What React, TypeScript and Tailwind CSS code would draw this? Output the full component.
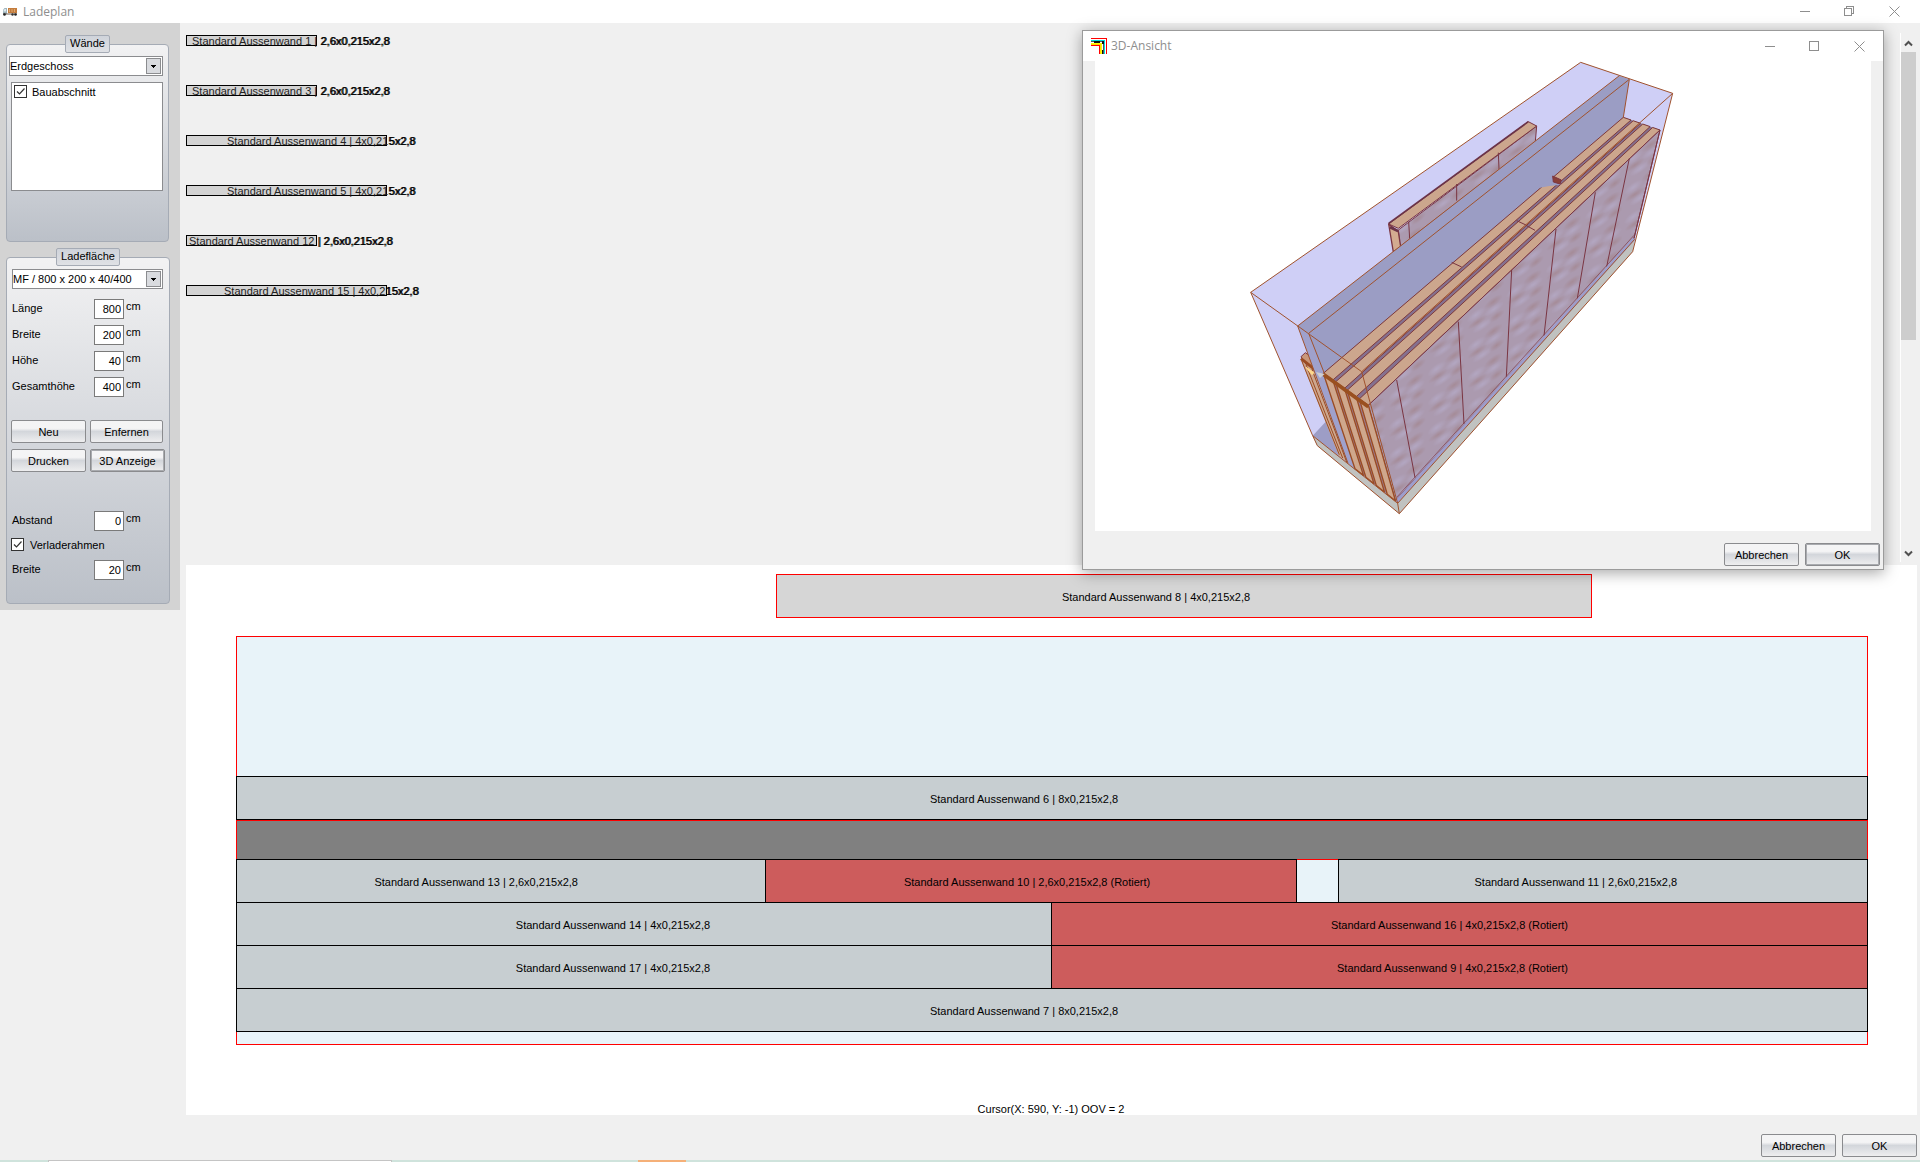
import { ReactNode } from "react";
import clsx from "clsx";

type Point = [number, number];

const storedWalls = [
  { inside: "Standard Aussenwand 1 |", outside: " 2,6x0,215x2,8", bar: "w-[131px] pl-[5px]" },
  { inside: "Standard Aussenwand 3 |", outside: " 2,6x0,215x2,8", bar: "w-[131px] pl-[5px]" },
  { inside: "Standard Aussenwand 4 | 4x0,21", outside: "5x2,8", bar: "w-[201px] pl-[40px]" },
  { inside: "Standard Aussenwand 5 | 4x0,21", outside: "5x2,8", bar: "w-[201px] pl-[40px]" },
  { inside: "Standard Aussenwand 12", outside: " | 2,6x0,215x2,8", bar: "w-[131px] pl-[2px]" },
  { inside: "Standard Aussenwand 15 | 4x0,2", outside: "15x2,8", bar: "w-[201px] pl-[37px]" },
];

const MinimizeIcon = () => (
  <svg className="w-[11px] h-[11px]" viewBox="0 0 11 11" shapeRendering="crispEdges">
    <path d="M0.5 5.5H10.5" stroke="#8e8e8e" />
  </svg>
);

const MaximizeIcon = () => (
  <svg className="w-[11px] h-[11px]" viewBox="0 0 11 11" fill="none" shapeRendering="crispEdges">
    <path d="M0.5 0.5H9.5V9.5H0.5Z" stroke="#8e8e8e" />
  </svg>
);

const RestoreIcon = () => (
  <svg className="w-[11px] h-[11px]" viewBox="0 0 11 11" fill="none" shapeRendering="crispEdges">
    <path d="M0.5 2.5H7.5V9.5H0.5ZM2.5 2.5V0.5H9.5V7.5H7.5" stroke="#8e8e8e" />
  </svg>
);

const CloseIcon = () => (
  <svg className="w-[11px] h-[11px]" viewBox="0 0 11 11">
    <path d="M0.5 0.5L10.5 10.5M10.5 0.5L0.5 10.5" stroke="#8e8e8e" />
  </svg>
);

const TruckIcon = () => (
  <svg className="w-4 h-4" viewBox="0 0 16 16">
    <path d="M1 6L2.500 4H5V10H1Z" fill="#9fb4bd" />
    <path d="M1.500 6.500L2.700 5H4V7.500H1.500Z" fill="#dfe9ee" />
    <rect x="6" y="4" width="9" height="5" fill="#c47c3c" />
    <path d="M7.500 5V8M10 5V8M12.500 5V8" stroke="#dba873" />
    <path d="M1 10H15" stroke="#6b5a4c" />
    <circle cx="2.500" cy="10.500" r="1.300" fill="#222" />
    <circle cx="10.500" cy="10.500" r="1.200" fill="#333" />
    <circle cx="13.500" cy="10.500" r="1.300" fill="#222" />
  </svg>
);

const CornerIcon = () => (
  <svg className="w-4 h-4" viewBox="0 0 16 16" fill="none" shapeRendering="crispEdges">
    <path d="M0 0.500H15.500V16" stroke="#f00" />
    <path d="M0 1.500H14.500V16" stroke="#fff" />
    <path d="M0 2.500H13.500V16" stroke="#0dd" />
    <path d="M0 3.500H12.500V16" stroke="#555" />
    <path d="M3 4H9M12 3V6M11 12V16" stroke="#111" strokeWidth="2" />
    <path d="M0 5.500H10.500V16" stroke="#ff0" />
    <path d="M0 6.500H9.500V16" stroke="#fd0" />
    <path d="M0 7.500H8.500V16" stroke="#f00" />
  </svg>
);

const WindowControls = ({ maximized }: { maximized?: boolean }) => (
  <div className="flex items-center gap-[34px]">
    <button aria-label="Minimieren">
      <MinimizeIcon />
    </button>
    <button aria-label="Maximieren">{maximized ? <RestoreIcon /> : <MaximizeIcon />}</button>
    <button aria-label="Schließen">
      <CloseIcon />
    </button>
  </div>
);

const Button = ({
  children,
  className = "w-[75px]",
  active,
}: {
  children: ReactNode;
  className?: string;
  active?: boolean;
}) => (
  <button
    className={clsx(
      "h-[23px] shrink-0 rounded-[2px] border border-[#8a8b8e] text-center leading-[20px]",
      "bg-linear-to-b from-[#f4f4f5] from-35% via-[#d3d6db] via-50% to-[#eeeeef]",
      active && "shadow-[inset_0_0_0_1px_#a9abaf]",
      className
    )}
  >
    {children}
  </button>
);

const Select = ({ label, value, className }: { label: string; value: string; className: string }) => (
  <div className={clsx("relative", className)}>
    <select
      aria-label={label}
      className="block w-full h-5 appearance-none border border-[#8b8c8f] bg-white pr-4 outline-none"
    >
      <option>{value}</option>
    </select>
    <svg
      className="absolute right-[2px] top-[2px] w-[15px] h-4 pointer-events-none"
      viewBox="0 0 15 16"
      shapeRendering="crispEdges"
    >
      <rect x="0.500" y="0.500" width="14" height="15" fill="#d9dbdf" stroke="#8b8c8f" />
      <path d="M5 7H10L7.500 10Z" fill="#000" />
    </svg>
  </div>
);

const CheckBox = ({ label, gap }: { label: string; gap: string }) => (
  <label className={clsx("flex items-center h-[13px]", gap)}>
    <span className="relative block w-[13px] h-[13px]">
      <input
        type="checkbox"
        defaultChecked
        className="block w-[13px] h-[13px] appearance-none border border-[#333] bg-white"
      />
      <svg className="absolute inset-0 pointer-events-none" viewBox="0 0 13 13" fill="none">
        <path d="M3 6.500L5.500 9L10.500 3.500" stroke="#333" strokeWidth="1.200" />
      </svg>
    </span>
    {label}
  </label>
);

const NumberField = ({ id, label, value }: { id: string; label: string; value: string }) => (
  <div className="flex items-center h-5 pl-px">
    <label htmlFor={id} className="w-[82px] pb-[2px]">
      {label}
    </label>
    <input
      id={id}
      defaultValue={value}
      className="w-[30px] h-5 border border-[#7a7a7a] bg-white pr-[2px] text-right outline-none"
    />
    <span className="self-start pl-[2px] leading-[15px]">cm</span>
  </div>
);

const Group = ({ title, className, children }: { title: string; className: string; children: ReactNode }) => (
  <fieldset
    className={clsx(
      "rounded-[4px] border border-[#a5abb5] bg-linear-to-b from-[#f2f2f3] to-[#bbc0c8]",
      className
    )}
  >
    <legend className="mx-auto h-[18px] rounded-[2px] border border-[#a5abb5] bg-linear-to-b from-[#cfd3da] to-[#dfe1e5] px-1 leading-[15px]">
      {title}
    </legend>
    {children}
  </fieldset>
);

const Sidebar = () => (
  <aside className="w-[180px] shrink-0 self-start bg-[#d3d3d3] pl-[6px] pr-[11px] pt-3 pb-[6px] flex flex-col gap-[6px]">
    <Group title="Wände" className="h-[207px] px-[2px]">
      <Select label="Geschoss" value="Erdgeschoss" className="mt-[3px] w-[154px]" />
      <div className="mt-[6px] ml-[2px] w-[152px] h-[109px] border border-[#8b8c8f] bg-white p-[2px]">
        <CheckBox label="Bauabschnitt" gap="gap-[5px]" />
      </div>
    </Group>
    <Group title="Ladefläche" className="h-[356px] px-1">
      <Select label="Fahrzeug" value="MF / 800 x 200 x 40/400" className="mt-[3px] ml-[1px] w-[151px]" />
      <div className="mt-[10px] flex flex-col gap-[6px]">
        <NumberField id="laenge" label="Länge" value="800" />
        <NumberField id="breite" label="Breite" value="200" />
        <NumberField id="hoehe" label="Höhe" value="40" />
        <NumberField id="gesamt" label="Gesamthöhe" value="400" />
      </div>
      <div className="mt-[23px] grid grid-cols-[75px_75px] gap-x-1 gap-y-[6px]">
        <Button>Neu</Button>
        <Button className="w-[73px]">Enfernen</Button>
        <Button>Drucken</Button>
        <Button active>3D Anzeige</Button>
      </div>
      <div className="mt-[39px]">
        <NumberField id="abstand" label="Abstand" value="0" />
      </div>
      <div className="mt-[7px] mb-[9px]">
        <CheckBox label="Verladerahmen" gap="gap-[6px]" />
      </div>
      <NumberField id="rahmen" label="Breite" value="20" />
    </Group>
  </aside>
);

const WallList = () => (
  <section className="flex h-[542px] justify-between">
    <ul className="pt-3 flex flex-col gap-[39px]">
      {storedWalls.map((wall) => (
        <li
          key={wall.inside}
          className={clsx("h-[11px] border border-black bg-[#d3d3d3] leading-[10px] whitespace-nowrap", wall.bar)}
        >
          <span className="whitespace-pre text-[#222]">{wall.inside}</span>
          <span className="whitespace-pre text-black [text-shadow:1px_0_#000]">{wall.outside}</span>
        </li>
      ))}
    </ul>
    <div className="mt-[10px] mb-[3px] mr-1 w-4 border-l border-white flex flex-col">
      <svg className="w-[15px] h-[19px]" viewBox="0 0 15 19" fill="none">
        <path d="M4 12.500L7.500 9L11 12.500" stroke="#505050" strokeWidth="2" />
      </svg>
      <div className="h-[288px] bg-[#cdcdcd]" />
      <svg className="mt-auto w-[15px] h-[19px]" viewBox="0 0 15 19" fill="none">
        <path d="M4 8.500L7.500 12L11 8.500" stroke="#505050" strokeWidth="2" />
      </svg>
    </div>
  </section>
);

const Wall = ({ label, className, rotated }: { label: string; className: string; rotated?: boolean }) => (
  <div
    className={clsx(
      "h-11 border border-black pt-[2px] flex items-center justify-center",
      rotated ? "bg-[#cd5c5c]" : "bg-[#c7ced1]",
      className
    )}
  >
    {label}
    {rotated && " (Rotiert)"}
  </div>
);

const LoadPlan = () => (
  <section className="flex-1 mr-[3px] bg-white pl-[50px] pr-[49px] pt-[9px] flex flex-col">
    <div className="ml-[540px] w-1/2 h-11 border border-[#f00] bg-[#d6d6d6] pt-[2px] pr-[56px] flex items-center justify-center">
      Standard Aussenwand 8 | 4x0,215x2,8
    </div>
    <div className="mt-[18px] h-[140px] border border-b-0 border-[#f00] bg-[#e8f3f9]" />
    <Wall label="Standard Aussenwand 6 | 8x0,215x2,8" className="pr-[56px]" />
    <div className="h-[40px] border border-[#f00] bg-[#808080]" />
    <div className="-mt-px flex justify-between bg-[#e8f3f9]">
      <div className="flex w-[65%]">
        <Wall label="Standard Aussenwand 13 | 2,6x0,215x2,8" className="w-1/2 pr-[50px]" />
        <Wall label="Standard Aussenwand 10 | 2,6x0,215x2,8" className="-ml-px flex-1 pr-[8px]" rotated />
      </div>
      <div className="flex-1 border-t border-[#f00]" />
      <Wall label="Standard Aussenwand 11 | 2,6x0,215x2,8" className="w-[32.5%] pr-[54px]" />
    </div>
    <div className="-mt-px flex">
      <Wall label="Standard Aussenwand 14 | 4x0,215x2,8" className="w-1/2 pr-[62px]" />
      <Wall label="Standard Aussenwand 16 | 4x0,215x2,8" className="-ml-px flex-1 pr-[20px]" rotated />
    </div>
    <div className="-mt-px flex">
      <Wall label="Standard Aussenwand 17 | 4x0,215x2,8" className="w-1/2 pr-[62px]" />
      <Wall label="Standard Aussenwand 9 | 4x0,215x2,8" className="-ml-px flex-1 pr-[14px]" rotated />
    </div>
    <Wall label="Standard Aussenwand 7 | 8x0,215x2,8" className="-mt-px pr-[56px]" />
    <div className="h-[13px] border border-t-0 border-[#f00] bg-[#e8f3f9]" />
    <p className="mt-[59px] pr-[2px] text-center leading-[11px]">Cursor(X: 590, Y: -1) OOV = 2</p>
  </section>
);

const mix = (a: Point, b: Point, t: number): Point => [a[0] + (b[0] - a[0]) * t, a[1] + (b[1] - a[1]) * t];
const pts = (...list: Point[]) => list.map((p) => p.join(",")).join(" ");

// corners of the packed stack on the right half of the load
const topNear: [Point, Point] = [[280, 970], [415, 1066]];
const topFar: [Point, Point] = [[1180, 202], [1290, 240]];
const footNear: [Point, Point] = [[375, 1256], [496, 1352]];
const planks: Point[] = [[0, 0.21], [0.27, 0.47], [0.53, 0.73], [0.8, 1]];

const seams = [
  "M500 990L555 1283",
  "M685 815L702 1122",
  "M845 660L829 980",
  "M978 537L942 857",
  "M1096 427L1042 745",
  "M1198 325L1130 650",
];

const LoadModel = () => (
  <svg className="block w-full" viewBox="-405 33 2328 1410" strokeLinejoin="round">
    <defs>
      <radialGradient id="light">
        <stop offset="0" stopColor="#b3a7c2" />
        <stop offset="1" stopColor="#b3a7c2" stopOpacity="0" />
      </radialGradient>
      <radialGradient id="dark">
        <stop offset="0" stopColor="#a58b97" />
        <stop offset="1" stopColor="#a58b97" stopOpacity="0" />
      </radialGradient>
      <pattern id="board" width="118" height="88" patternUnits="userSpaceOnUse" patternTransform="skewY(-32)">
        <rect width="118" height="88" fill="#ab9aaf" />
        <ellipse cx="30" cy="24" rx="28" ry="15" fill="url(#light)" />
        <ellipse cx="84" cy="40" rx="30" ry="13" fill="url(#light)" />
        <ellipse cx="50" cy="68" rx="32" ry="13" fill="url(#light)" />
        <ellipse cx="82" cy="17" rx="28" ry="14" fill="url(#dark)" />
        <ellipse cx="34" cy="48" rx="30" ry="11" fill="url(#dark)" />
        <ellipse cx="92" cy="66" rx="24" ry="13" fill="url(#dark)" />
      </pattern>
    </defs>

    {/* loading space and platform */}
    <polygon points="1052,37 1328,130 1208,605 508,1391 262,1187 248,1157 62,727" fill="#cfcff6" />
    <polygon points="248,1157 292,1110 700,900 1214,565 503,1360" fill="#9d9dc6" />
    <polygon points="248,1157 503,1360 1214,568 1208,605 508,1391 262,1187" fill="#c0c2c0" />

    {/* single wall behind the frame */}
    <polygon points="505,540 920,228 916,275 510,590" fill="url(#board)" stroke="#7a3542" strokeWidth="3" />
    <polygon points="476,522 505,545 512,590 490,606" fill="#d3ab90" stroke="#7a3542" strokeWidth="4" />
    <polygon points="476,522 895,215 920,228 505,535" fill="#cca68d" stroke="#7a3542" strokeWidth="3" />
    <path d="M476 520L895 215" stroke="#6b3348" strokeWidth="5" />
    <path d="M480 532L504 543" stroke="#6b3348" strokeWidth="8" />
    <path d="M536 515L539 566M680 402V452M805 308L807 357" stroke="#7a3542" strokeWidth="3" />

    {/* near end of that wall, left of the frame */}
    <polygon points="213,920 226,908 300,960 240,960" fill="#c9977a" stroke="#7a3542" strokeWidth="3" />
    <polygon points="213,930 250,962 350,1236 326,1216" fill="#cda78f" />
    <path d="M215 932L328 1214M228 944L338 1224M246 958L350 1236" stroke="#9a4c24" strokeWidth="3" />
    <path d="M213 926L262 964" stroke="#9a4c24" strokeWidth="9" />
    <path d="M228 952L252 968L246 974Z" fill="#ffd98c" stroke="#ffd98c" strokeWidth="3" />

    {/* frame */}
    <polygon points="203,828 1168,77 1198,88 1180,202 280,972" fill="#9b9dc4" />
    <polygon points="203,828 236,850 285,975 384,1264 354,1240" fill="#9fa1cc" />
    <path d="M203 828L354 1240M236 850L285 975" stroke="#a0522d" strokeWidth="3" fill="none" />

    {/* top edges of the stack */}
    <polygon points={pts(topNear[0], topFar[0], topFar[1], topNear[1])} fill="#85708f" />
    {planks.map(([from, to]) => (
      <polygon
        key={from}
        points={pts(
          mix(topNear[0], topNear[1], from),
          mix(topFar[0], topFar[1], from),
          mix(topFar[0], topFar[1], to),
          mix(topNear[0], topNear[1], to)
        )}
        fill="#cca68d"
        stroke="#7d3a3c"
        strokeWidth="3"
      />
    ))}
    <polygon points="925,414 968,376 992,404 958,408" fill="#9b9dc4" />
    <path d="M968 378L994 390L990 402L970 396Z" fill="#8b4038" stroke="#7a3542" strokeWidth="3" />
    <path d="M665 637L695 651M860 512L888 525M888 526L915 541" stroke="#7a3542" strokeWidth="3" />

    {/* long side */}
    <polygon
      points={pts(topNear[1], topFar[1], [1212, 565], footNear[1])}
      fill="url(#board)"
      stroke="#7a3542"
      strokeWidth="3"
    />
    {seams.map((d) => (
      <path key={d} d={d} stroke="#7a3542" strokeWidth="3" />
    ))}
    <path d="M500 1354L1212 566" stroke="#9d9dcc" strokeWidth="9" />
    <path d="M500 1342L1212 556" stroke="#7a3542" strokeWidth="2" />

    {/* front faces */}
    <polygon points={pts(topNear[0], topNear[1], footNear[1], footNear[0])} fill="#9c7c93" />
    {planks.map(([from, to]) => (
      <polygon
        key={from}
        points={pts(
          mix(topNear[0], topNear[1], from),
          mix(topNear[0], topNear[1], to),
          mix(footNear[0], footNear[1], to),
          mix(footNear[0], footNear[1], from)
        )}
        fill="#cfa78c"
        stroke="#9a4c24"
        strokeWidth="4"
      />
    ))}
    <path d="M280 973L415 1070" stroke="#9a5020" strokeWidth="11" />
    <path d="M258 966L284 972L270 984Z" fill="#cdcdd2" />

    {/* edges of the loading space */}
    <g fill="none" stroke="#a0522d" strokeWidth="3">
      <path d="M62 727L1052 37L1328 130L1208 605L508 1391L262 1187L248 1157Z" />
      <path d="M62 727L395 965L1328 130M395 965L503 1360L508 1391M248 1157L503 1360L1214 568" />
      <path d="M203 828L1168 77M236 850L1198 88L1180 202" />
      <path d="M1290 240L1212 565" stroke="#7a3542" />
    </g>
  </svg>
);

const ModelWindow = () => (
  <div
    role="dialog"
    aria-label="3D-Ansicht"
    className="absolute right-[36px] top-[30px] w-[802px] border border-[#9b9b9b] bg-[#f0f0f0] shadow-[0_3px_14px_rgba(0,0,0,0.35)]"
  >
    <div className="h-[30px] bg-white pl-2 pr-[18px] flex items-center justify-between">
      <div className="flex items-center gap-1 font-['Open_Sans',sans-serif] text-[12px] text-[#8e8e8e]">
        <CornerIcon />
        3D-Ansicht
      </div>
      <WindowControls />
    </div>
    <div className="mx-3 bg-white">
      <LoadModel />
    </div>
    <div className="pt-3 pb-[3px] pr-[3px] flex justify-end gap-[6px]">
      <Button>Abbrechen</Button>
      <Button active>OK</Button>
    </div>
  </div>
);

const App = () => {
  return (
    <div className="relative min-h-screen flex flex-col bg-[#f0f0f0] font-['Liberation_Sans',Arial,sans-serif] text-[11px] leading-[14px] text-black">
      <header className="h-[23px] bg-white pl-[2px] pr-[20px] flex items-center justify-between">
        <div className="flex items-center gap-[5px] font-['Open_Sans',sans-serif] text-[12px] text-[#8e8e8e]">
          <TruckIcon />
          Ladeplan
        </div>
        <WindowControls maximized />
      </header>
      <div className="flex-1 flex gap-[6px]">
        <Sidebar />
        <main className="flex-1 flex flex-col">
          <WallList />
          <LoadPlan />
        </main>
      </div>
      <footer className="h-[45px] pt-[19px] pr-[3px] flex justify-end gap-[6px]">
        <Button>Abbrechen</Button>
        <Button>OK</Button>
      </footer>
      <div className="h-[2px] bg-[#cfe3dc] flex">
        <div className="ml-[48px] w-[344px] border-t border-x border-[#c4c4c4] bg-white" />
        <div className="ml-[246px] w-[48px] bg-[#f5b078]" />
      </div>
      <ModelWindow />
    </div>
  );
};

export default App;
